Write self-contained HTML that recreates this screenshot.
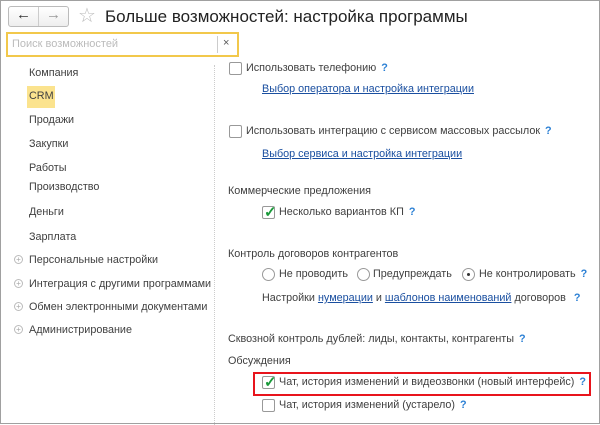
<!DOCTYPE html>
<html><head><meta charset="utf-8"><style>
*{margin:0;padding:0;box-sizing:border-box}
body{width:600px;height:424px;overflow:hidden;background:#fff;font-family:"Liberation Sans",Arial,sans-serif;font-size:10.8px;color:#404040;position:relative;border:1px solid #a0a0a0}
.a{position:absolute;white-space:nowrap}
.cb{position:absolute;width:13px;height:13px;border:1px solid #999;border-radius:2px;background:#fff}
.rb{position:absolute;width:13px;height:13px;border:1px solid #999;border-radius:50%;background:#fff}
.q{color:#2a7fd4;font-weight:bold;margin-left:5px}
.lk{color:#1a4fa0;text-decoration:underline}
.pl{position:absolute;width:9px;height:9px;border:1px solid #bbb;border-radius:50%;color:#aaa;font-size:8px;line-height:7px;text-align:center}
.chk{position:absolute;left:1px;top:-4px;color:#1a9a3a;font-size:15px;font-weight:bold}
</style></head><body>
<div class="a" style="left:7px;top:5px;width:61px;height:21px;border:1px solid #bbb;border-radius:3px;background:linear-gradient(#fff,#eee)"></div>
<div class="a" style="left:37px;top:6px;width:1px;height:19px;background:#ccc"></div>
<div class="a" style="left:15px;top:5px;font-size:15px;color:#333">&#8592;</div>
<div class="a" style="left:45px;top:5px;font-size:15px;color:#999">&#8594;</div>
<div class="a" style="left:77px;top:2px;font-size:20px;color:#bbb">&#9734;</div>
<div class="a" style="left:104px;top:6px;font-size:17px;color:#222">Больше возможностей: настройка программы</div>
<div class="a" style="left:5px;top:31px;width:233px;height:25px;border:2px solid #f2c84b;background:#fff"></div>
<div class="a" style="left:11px;top:37px;color:#bbb;font-size:11px">Поиск возможностей</div>
<div class="a" style="left:216px;top:35px;width:1px;height:17px;background:#ccc"></div>
<div class="a" style="left:222px;top:36px;color:#555;font-size:11px">×</div>
<div class="a" style="left:213px;top:64px;height:360px;border-left:1px dotted #ccc"></div>
<div class="a" style="left:28px;top:66px">Компания</div>
<div class="a" style="left:26px;top:85px;width:28px;height:22px;background:#fbe38e"></div>
<div class="a" style="left:28px;top:89px">CRM</div>
<div class="a" style="left:28px;top:113px">Продажи</div>
<div class="a" style="left:28px;top:137px">Закупки</div>
<div class="a" style="left:28px;top:161px">Работы</div>
<div class="a" style="left:28px;top:180px">Производство</div>
<div class="a" style="left:28px;top:205px">Деньги</div>
<div class="a" style="left:28px;top:230px">Зарплата</div>
<div class="pl" style="left:13px;top:254px">+</div><div class="a" style="left:28px;top:253px">Персональные настройки</div>
<div class="pl" style="left:13px;top:278px">+</div><div class="a" style="left:28px;top:277px">Интеграция с другими программами</div>
<div class="pl" style="left:13px;top:301px">+</div><div class="a" style="left:28px;top:300px">Обмен электронными документами</div>
<div class="pl" style="left:13px;top:324px">+</div><div class="a" style="left:28px;top:323px">Администрирование</div>

<div class="cb" style="left:228px;top:61px"></div>
<div class="a" style="left:245px;top:61px">Использовать телефонию<span class="q">?</span></div>
<div class="a lk" style="left:261px;top:82px">Выбор оператора и настройка интеграции</div>
<div class="cb" style="left:228px;top:124px"></div>
<div class="a" style="left:245px;top:124px">Использовать интеграцию с сервисом массовых рассылок<span class="q">?</span></div>
<div class="a lk" style="left:261px;top:147px">Выбор сервиса и настройка интеграции</div>
<div class="a" style="left:227px;top:184px">Коммерческие предложения</div>
<div class="cb" style="left:261px;top:205px"><span class="chk">✓</span></div>
<div class="a" style="left:278px;top:205px">Несколько вариантов КП<span class="q">?</span></div>
<div class="a" style="left:227px;top:247px">Контроль договоров контрагентов</div>
<div class="rb" style="left:261px;top:267px"></div>
<div class="a" style="left:278px;top:267px">Не проводить</div>
<div class="rb" style="left:356px;top:267px"></div>
<div class="a" style="left:372px;top:267px">Предупреждать</div>
<div class="rb" style="left:461px;top:267px"><div style="position:absolute;left:4px;top:4px;width:3px;height:3px;border-radius:50%;background:#333"></div></div>
<div class="a" style="left:478px;top:267px">Не контролировать<span class="q">?</span></div>
<div class="a" style="left:261px;top:291px">Настройки <span class="lk">нумерации</span> и <span class="lk">шаблонов наименований</span> договоров<span class="q" style="margin-left:8px">?</span></div>
<div class="a" style="left:227px;top:332px">Сквозной контроль дублей: лиды, контакты, контрагенты<span class="q">?</span></div>
<div class="a" style="left:227px;top:354px">Обсуждения</div>
<div class="a" style="left:252px;top:371px;width:338px;height:24px;border:2px solid #e8141c"></div>
<div class="cb" style="left:261px;top:375px"><span class="chk">✓</span></div>
<div class="a" style="left:278px;top:375px">Чат, история изменений и видеозвонки (новый интерфейс)<span class="q">?</span></div>
<div class="cb" style="left:261px;top:398px"></div>
<div class="a" style="left:278px;top:398px">Чат, история изменений (устарело)<span class="q">?</span></div>
</body></html>
